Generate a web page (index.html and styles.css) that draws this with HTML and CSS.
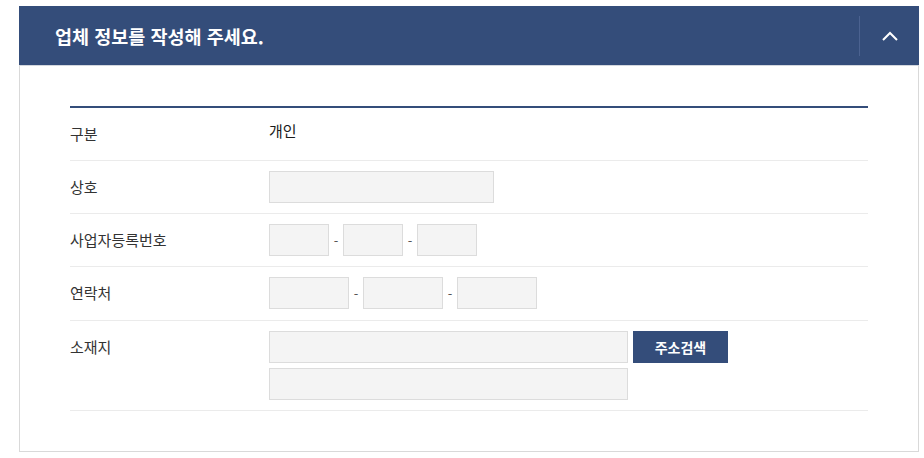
FILE: index.html
```html
<!DOCTYPE html>
<html lang="ko">
<head>
<meta charset="utf-8">
<link rel="stylesheet" href="styles.css">
</head>
<body>
<section class="panel">
  <header class="panel-head">
    <h2 class="panel-title">업체 정보를 작성해 주세요.</h2>
    <button class="toggle" type="button" aria-label="접기">
      <svg width="16" height="10" viewBox="0 0 16 10"><path d="M1 9 L8 2 L15 9" fill="none" stroke="#fff" stroke-width="2"/></svg>
    </button>
  </header>
  <div class="panel-body">
    <div class="form">
      <div class="row">
        <div class="label">구분</div>
        <div class="value"><span class="static">개인</span></div>
      </div>
      <div class="row">
        <div class="label">상호</div>
        <div class="value"><input class="field w225" type="text"></div>
      </div>
      <div class="row">
        <div class="label">사업자등록번호</div>
        <div class="value">
          <input class="field w60" type="text"><span class="dash">-</span><input class="field w60" type="text"><span class="dash">-</span><input class="field w60" type="text">
        </div>
      </div>
      <div class="row row-tall">
        <div class="label">연락처</div>
        <div class="value">
          <input class="field w80" type="text"><span class="dash">-</span><input class="field w80" type="text"><span class="dash">-</span><input class="field w80" type="text">
        </div>
      </div>
      <div class="row">
        <div class="label">소재지</div>
        <div class="value stack">
          <div class="addr-line">
            <input class="field w359" type="text">
            <button class="btn" type="button">주소검색</button>
          </div>
          <input class="field w359" type="text">
        </div>
      </div>
    </div>
  </div>
</section>
</body>
</html>
```

FILE: styles.css
```css
* { box-sizing: border-box; }
html, body { margin: 0; padding: 0; background: #fff; }
body {
  font-family: "Noto Sans CJK KR", "Noto Sans", sans-serif;
  color: #333;
}
.panel {
  width: 900px;
  margin: 6px 0 0 19px;
}
.panel-head {
  height: 59px;
  background: #344d7a;
  display: flex;
  align-items: center;
}
.panel-title {
  flex: 1;
  margin: 0;
  padding-left: 36px;
  color: #fff;
  font-size: 18.5px;
  font-weight: 700;
  line-height: 24px;
}
.toggle {
  width: 60px;
  height: 40px;
  border: 0;
  border-left: 1px solid #4b6290;
  background: transparent;
  padding: 0;
  display: flex;
  align-items: center;
  justify-content: center;
  cursor: pointer;
}
.panel-body {
  border: 1px solid #d9d9d9;
  border-top-color: #d3d7de;
  padding: 40px 50px;
}
.form {
  border-top: 2px solid #344d7a;
}
.row {
  display: grid;
  grid-template-columns: 199px 1fr;
  padding: 10px 0;
  border-bottom: 1px solid #ebebeb;
}
.row-tall { padding-bottom: 11px; }
.label {
  font-size: 15px;
  line-height: 32px;
  color: #333;
}
.value {
  display: flex;
  align-items: center;
}
.value.stack {
  flex-direction: column;
  align-items: flex-start;
  gap: 5px;
}
.static {
  font-size: 15px;
  line-height: 32px;
  color: #1a1a1a;
  font-weight: 400;
  position: relative;
  top: -3px;
}
.field {
  height: 32px;
  background: #f4f4f4;
  border: 1px solid #dcdcdc;
  margin: 0;
  padding: 0 8px;
  font: inherit;
}
.w225 { width: 225px; }
.w60 { width: 60px; }
.w80 { width: 80px; }
.w359 { width: 359px; }
.dash {
  width: 14px;
  text-align: center;
  font-size: 13px;
  color: #555;
}
.addr-line {
  display: flex;
  gap: 5px;
}
.btn {
  width: 95px;
  height: 32px;
  border: 0;
  background: #344d7a;
  color: #fff;
  font-family: inherit;
  font-size: 14px;
  font-weight: 700;
  padding: 0;
  cursor: pointer;
}
```
